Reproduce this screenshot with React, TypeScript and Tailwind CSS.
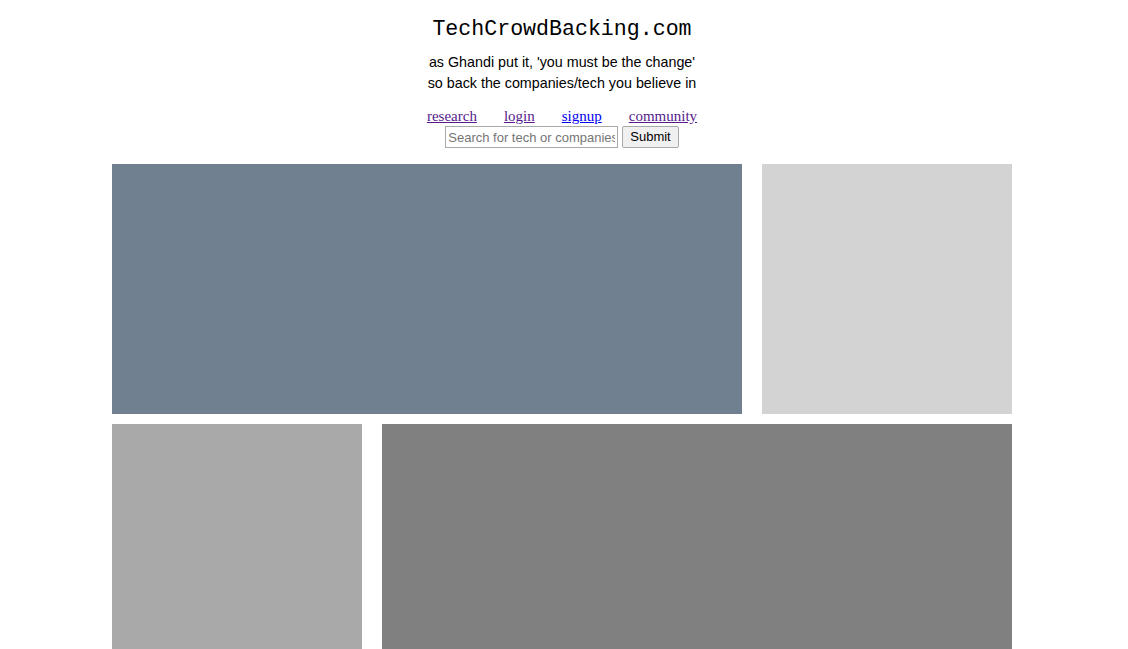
import React from 'react';

const links = [
    { label: 'research', visited: true },
    { label: 'login', visited: true },
    { label: 'signup', visited: false },
    { label: 'community', visited: true },
];

const App: React.FC = () => {
    return (
        <div className="w-[900px] ml-[112px] bg-white">
            <div className="flex flex-col items-center pt-[16px]">
                <h1 className="font-['Courier_New','Liberation_Mono',monospace] text-[21.6px] leading-[26px] text-black font-normal">
                    TechCrowdBacking.com
                </h1>
                <div className="mt-[10px] text-center font-['Liberation_Sans',Arial,sans-serif] text-[14.3px] leading-[21px] text-black">
                    <p>as Ghandi put it, 'you must be the change'</p>
                    <p>so back the companies/tech you believe in</p>
                </div>
                <nav className="mt-[14px] flex gap-[27px] font-['Liberation_Serif',serif] text-[15px] leading-[17px]">
                    {links.map((l) => (
                        <a
                            key={l.label}
                            href="#"
                            className={`underline ${l.visited ? 'text-[#551a8b]' : 'text-[#0000ee]'}`}
                        >
                            {l.label}
                        </a>
                    ))}
                </nav>
                <form className="mt-[1px] flex items-center gap-[4px] font-['Liberation_Sans',Arial,sans-serif] text-[13px]">
                    <input
                        type="text"
                        placeholder="Search for tech or companies"
                        className="w-[173px] h-[22px] border border-[#a9a9a9] px-[2px] placeholder:text-[#757575]"
                    />
                    <button
                        type="button"
                        className="h-[22px] px-[7px] border border-[#a9a9a9] bg-[#f0f0f0] rounded-[2px] text-black"
                    >
                        Submit
                    </button>
                </form>
            </div>
            <div className="mt-[16px] flex gap-[20px]">
                <div className="w-[630px] h-[250px] bg-[#708090]" />
                <div className="w-[250px] h-[250px] bg-[#d3d3d3]" />
            </div>
            <div className="mt-[10px] flex gap-[20px]">
                <div className="w-[250px] h-[250px] bg-[#a9a9a9]" />
                <div className="w-[630px] h-[250px] bg-[#808080]" />
            </div>
        </div>
    );
};

export default App;
